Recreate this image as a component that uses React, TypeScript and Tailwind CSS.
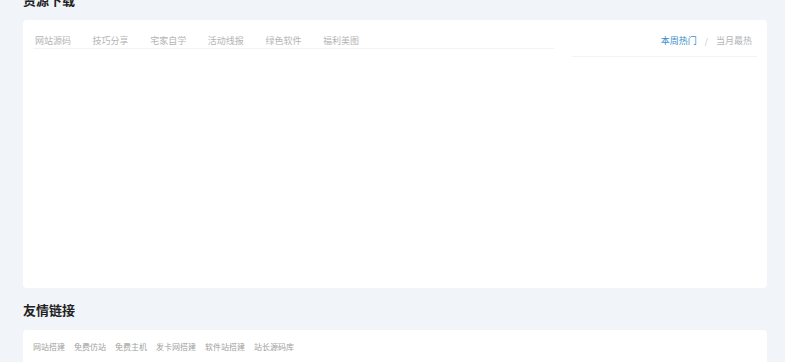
import React from "react";

const tabs = ["网站源码", "技巧分享", "宅家自学", "活动线报", "绿色软件", "福利美图"];
const links = ["网站搭建", "免费仿站", "免费主机", "发卡网搭建", "软件站搭建", "站长源码库"];

export default function App() {
  return (
    <div
      className="h-[362px] w-full overflow-hidden bg-[#f1f4f9] px-[23px] pr-[18px]"
      style={{ fontFamily: '"Noto Sans CJK SC", "Noto Sans", sans-serif' }}
    >
      <div className="-mt-[22px]">
        <div className="flex h-[42px] items-center">
          <h2 className="text-[13px] font-bold leading-none text-[#222]">资源下载</h2>
        </div>
        <div className="flex h-[268px] gap-[18px] rounded-[4px] bg-white px-[10px] pt-[14px]">
          <div className="flex h-[15px] flex-1 gap-[21.6px] border-b border-[#f2f3f5] pl-[2px]">
            {tabs.map((t) => (
              <span key={t} className="text-[9px] leading-[14px] text-[#b4b4b4]">
                {t}
              </span>
            ))}
          </div>
          <div className="flex h-[23px] w-[185px] items-start justify-end border-b border-[#f2f3f5] pr-[5px]">
            <span className="text-[9px] leading-[14px] text-[#3b8ccb]">本周热门</span>
            <span className="mx-[8px] text-[8px] leading-[14px] text-[#bbb]">/</span>
            <span className="text-[9px] leading-[14px] text-[#b4b4b4]">当月最热</span>
          </div>
        </div>
        <div className="flex h-[42px] items-center">
          <h2 className="text-[13px] font-bold leading-none text-[#222]">友情链接</h2>
        </div>
        <div className="h-[32px] rounded-t-[4px] bg-white px-[10px] pt-[12px]">
          <div className="flex gap-[9px]">
            {links.map((l) => (
              <span key={l} className="text-[8px] leading-[10px] text-[#a0a0a0]">
                {l}
              </span>
            ))}
          </div>
        </div>
      </div>
    </div>
  );
}
